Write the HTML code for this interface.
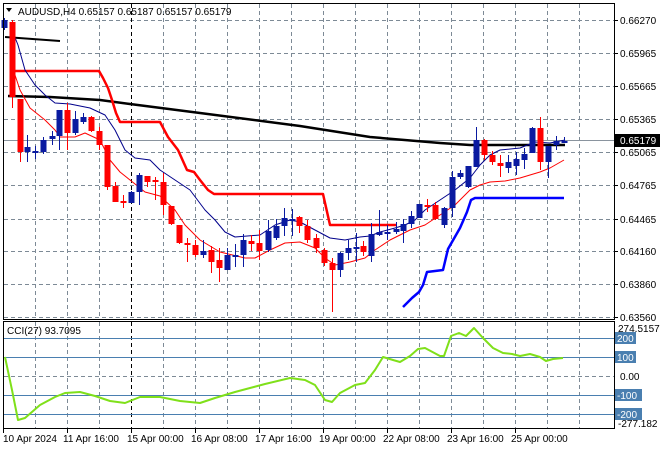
<!DOCTYPE html>
<html><head><meta charset="utf-8"><style>
html,body{margin:0;padding:0;background:#fff;width:660px;height:450px;overflow:hidden}
svg{display:block;font-family:"Liberation Sans",sans-serif;font-size:10px}
</style></head><body>
<svg id="s" width="660" height="450" xmlns="http://www.w3.org/2000/svg"></svg>
<script>
var s='';
function L(x1,y1,x2,y2,c,w,d){s+='<line x1="'+x1+'" y1="'+y1+'" x2="'+x2+'" y2="'+y2+'" stroke="'+c+'" stroke-width="'+(w||1)+'"'+(d?' stroke-dasharray="'+d+'"':'')+'/>';}
function P(pts,c,w){s+='<polyline fill="none" stroke="'+c+'" stroke-width="'+w+'" stroke-linejoin="round" points="'+pts+'"/>';}
function T(x,y,t,c,a){s+='<text x="'+x+'" y="'+y+'" fill="'+(c||'#000')+'"'+(a?' text-anchor="'+a+'"':'')+'>'+t+'</text>';}
// grid
var hy=[20,53,86,119,152,185,219,251,284,317];
hy.forEach(function(y){L(4,y+.5,614,y+.5,'#7d8a96',1,'4,3');});
for(var x=35;x<=600;x+=32){var blk=(x==131||x==371);
 L(x+.5,4,x+.5,319,blk?'#000':'#7d8a96',1,'4,3');L(x+.5,322,x+.5,428,blk?'#000':'#7d8a96',1,'4,3');}
// cci levels
[338,357,395,414].forEach(function(y){L(4,y+.5,614,y+.5,'#4a7fb0',1);});
L(4,376.5,614,376.5,'#7d8a96',1,'4,3');
// current price line
L(4,140.5,614,140.5,'#8a949e',1);
// indicators
P('5,37 60,41','#000',2);
P('8,96 50,97 100,100 130,104 200,113 300,126 370,137 440,143 470,145 565,145','#000',2.5);
P('15,71 99,71 103,78 108,88 112,100 116,113 120,122 160,122 168,137 178,150 187,170 194,172 200,180 208,190 214,194 323,194 330,225 396,225','#f00',2.5);
P('403,307 412,298 419,292 423,285 427,272 443,270 448,249 460,228 467,212 471,200 475,198 564,198','#0000ff',2.5);
P('10,25 18,45 25,70 35,85 45,95 55,103 70,104 90,108 105,115 115,130 125,150 135,158 150,160 160,170 175,180 190,190 205,210 215,220 225,232 235,237 260,235 275,225 290,220 300,222 315,230 330,238 345,240 360,237 370,236 380,232 395,228 405,225 415,220 425,210 440,200 455,190 470,178 480,165 490,155 500,150 520,148 535,142 550,143 565,140','#00008b',1);
P('10,60 20,90 30,108 45,120 55,130 60,137 75,137 85,133 100,140 110,160 120,172 130,180 145,192 160,196 175,210 185,225 200,240 220,252 245,258 255,258 270,250 285,243 300,242 315,248 325,258 335,265 350,262 365,258 375,250 390,240 400,235 410,230 425,225 440,215 455,205 470,190 480,185 490,182 505,181 520,178 530,175 540,172 550,168 564,160','#f00',1);
// candles: x, top, bottom, wickTop, wickBot, color(b/r)
var C=[[4,20,28,18,30,'b'],[12,22,97,20,108,'r'],[20,99,152,99,162,'r'],[27,147,152,135,162,'b'],[35,151,153,146,159,'b'],[43,140,152,137,154,'b'],[52,136,139,131,145,'b'],[59,110,136,110,150,'b'],[67,110,133,103,150,'r'],[75,119,133,111,135,'b'],[83,117,122,113,124,'b'],[91,117,131,116,132,'r'],[99,131,145,127,150,'r'],[107,145,187,145,190,'r'],[115,186,202,182,202,'r'],[123,201,203,195,208,'r'],[131,192,203,191,203,'b'],[139,175,192,173,205,'b'],[147,176,182,176,187,'r'],[155,180,182,177,200,'r'],[163,182,205,173,215,'r'],[171,206,224,206,225,'r'],[179,225,243,225,244,'r'],[187,243,245,238,262,'r'],[195,245,255,240,257,'r'],[203,251,255,240,258,'b'],[211,250,262,246,273,'r'],[219,260,268,248,282,'r'],[227,255,270,248,270,'b'],[235,255,256,244,267,'b'],[243,240,255,234,267,'b'],[251,241,244,235,251,'r'],[259,243,251,230,260,'r'],[268,231,250,220,252,'b'],[276,226,238,219,240,'b'],[284,218,226,208,236,'b'],[292,219,220,209,236,'b'],[299,217,226,216,233,'r'],[307,226,240,220,243,'r'],[316,238,248,234,253,'r'],[324,250,263,248,266,'r'],[332,263,270,258,312,'r'],[340,253,270,252,277,'b'],[348,248,253,240,260,'b'],[356,247,249,233,262,'b'],[363,246,252,241,256,'r'],[371,234,256,223,262,'b'],[379,232,235,210,236,'b'],[387,232,234,225,240,'b'],[396,229,232,222,234,'b'],[403,224,231,219,243,'b'],[411,216,224,211,228,'b'],[419,204,218,204,218,'b'],[427,205,207,199,212,'r'],[435,205,219,202,220,'r'],[444,208,225,207,228,'b'],[452,177,208,171,217,'b'],[460,173,177,170,179,'b'],[468,166,187,166,188,'b'],[476,140,167,127,167,'b'],[484,140,155,139,160,'r'],[492,155,162,151,165,'r'],[500,163,166,155,177,'r'],[508,162,168,155,173,'b'],[516,159,166,152,175,'b'],[524,154,160,148,169,'b'],[532,128,153,127,153,'b'],[540,128,162,117,170,'r'],[548,146,162,146,178,'b'],[556,141,145,136,150,'b'],[564,141,143,137,143,'b']];
C.forEach(function(c){var col=c[5]=='b'?'#0a1aa0':'#f00';
 L(c[0]+.5,c[3],c[0]+.5,c[4],col,1);
 s+='<rect x="'+(c[0]-2.5)+'" y="'+c[1]+'" width="6" height="'+Math.max(2,c[2]-c[1])+'" fill="'+col+'"/>';});
// CCI
P('5,357 12,390 18,420 25,418 40,405 55,397 65,393 80,392 95,396 110,401 125,403 140,397 160,397 180,401 200,403 215,398 235,392 250,388 265,384 290,378 305,380 315,385 325,400 332,402 340,393 355,385 365,383 375,370 383,357 393,360 400,362 410,356 418,349 425,348 440,356 444,356 451,336 459,333 466,336 474,328 483,338 493,348 503,353 512,354 520,356 530,354 540,357 546,361 553,359 563,358','#7fe01a',2);
// frames
s+='<rect x="3.5" y="3.5" width="611" height="316" fill="none" stroke="#000"/>';
s+='<rect x="3.5" y="321.5" width="611" height="107" fill="none" stroke="#000"/>';
// axis labels
var pl=['0.66270','0.65965','0.65665','0.65365','0.65065','0.64765','0.64465','0.64160','0.63860','0.63560'];
pl.forEach(function(t,i){L(614,hy[i]+.5,618,hy[i]+.5,'#000');T(620,hy[i]+4,t);});
s+='<rect x="615" y="134" width="45" height="13" fill="#000"/>';T(620,144,'0.65179','#fff');
T(618,332,'274.5157');T(620,380,'0.00');T(618,427,'-277.182');
[[338,'200'],[357,'100'],[395,'-100'],[414,'-200']].forEach(function(a){
 s+='<rect x="615" y="'+(a[0]-6)+'" width="'+(a[1].length*6+3)+'" height="12" fill="#4a7fb0"/>';T(617,a[0]+4,a[1],'#fff');});
// time labels
var tl=[[3,'10 Apr 2024'],[67,'11 Apr 16:00'],[131,'15 Apr 00:00'],[195,'16 Apr 08:00'],[259,'17 Apr 16:00'],[323,'19 Apr 00:00'],[387,'22 Apr 08:00'],[451,'23 Apr 16:00'],[515,'25 Apr 00:00']];
tl.forEach(function(a){L(a[0]+.5,429,a[0]+.5,433,'#000');T(a[0]+(a[0]==3?0:-4),442,a[1]);});
// titles
s+='<polygon points="6,8 12,8 9,12" fill="#000"/>';
T(18,15,'AUDUSD,H4  0.65157 0.65187 0.65157 0.65179');
T(7,334,'CCI(27) 93.7095');
document.getElementById('s').innerHTML=s;
</script>
</body></html>
